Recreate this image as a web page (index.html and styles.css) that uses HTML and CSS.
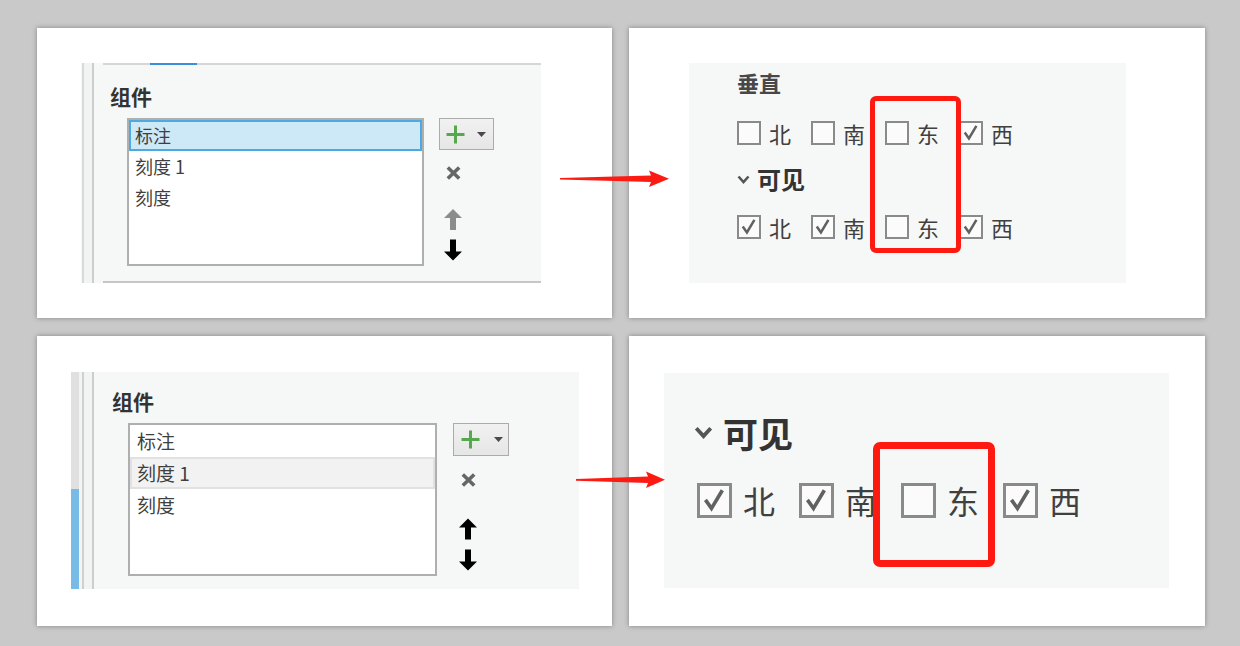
FILE: index.html
```html
<!DOCTYPE html>
<html lang="zh-CN">
<head>
<meta charset="utf-8">
<title>组件与可见性</title>
<link rel="stylesheet" href="styles.css">
</head>
<body>
<div class="grid">
  <!-- top left -->
  <div class="card c1">
    <div class="panel p1">
      <div class="rail r1"></div>
      <div class="pbody b1">
        <div class="tabline"><span class="tabsel"></span></div>
        <h3 class="grp g1">组件</h3>
        <div class="comp">
          <ul class="list l1">
            <li class="item sel">标注</li>
            <li class="item">刻度 1</li>
            <li class="item">刻度</li>
          </ul>
          <div class="tools t1">
            <div class="addbtn">
              <svg class="plus" viewBox="0 0 19 19"><path d="M9.5 0.5V18.5M0.5 9.5H18.5"/></svg>
              <svg class="tri" viewBox="0 0 9 5"><polygon points="0,0 9,0 4.5,5"/></svg>
            </div>
            <svg class="xicon" viewBox="0 0 15 14"><path d="M1.8 1.5L13.2 12.5M13.2 1.5L1.8 12.5"/></svg>
            <svg class="arr up grey" viewBox="0 0 18 21"><polygon points="9,0 18,9 12,9 12,21 6,21 6,9 0,9"/></svg>
            <svg class="arr down" viewBox="0 0 18 21"><polygon points="9,21 18,12 12,12 12,0 6,0 6,12 0,12"/></svg>
          </div>
        </div>
        <div class="bottomline"></div>
      </div>
    </div>
  </div>

  <!-- top right -->
  <div class="card c2">
    <div class="panel p2">
      <h3 class="sub s2">垂直</h3>
      <div class="cbrow row2a">
        <label class="cb"><span class="box"></span><span class="lbl">北</span></label>
        <label class="cb"><span class="box"></span><span class="lbl">南</span></label>
        <label class="cb"><span class="box"></span><span class="lbl">东</span></label>
        <label class="cb"><span class="box"><svg viewBox="0 0 24 24"><path d="M4.5 11.5L9.5 18.5L18.5 3.5"/></svg></span><span class="lbl">西</span></label>
      </div>
      <div class="exp e2">
        <svg class="chev" viewBox="0 0 13 9"><path d="M1.5 1.5L6.5 7L11.5 1.5"/></svg>
        <span class="exptxt">可见</span>
      </div>
      <div class="cbrow row2b">
        <label class="cb"><span class="box"><svg viewBox="0 0 24 24"><path d="M4.5 11.5L9.5 18.5L18.5 3.5"/></svg></span><span class="lbl">北</span></label>
        <label class="cb"><span class="box"><svg viewBox="0 0 24 24"><path d="M4.5 11.5L9.5 18.5L18.5 3.5"/></svg></span><span class="lbl">南</span></label>
        <label class="cb"><span class="box"></span><span class="lbl">东</span></label>
        <label class="cb"><span class="box"><svg viewBox="0 0 24 24"><path d="M4.5 11.5L9.5 18.5L18.5 3.5"/></svg></span><span class="lbl">西</span></label>
      </div>
    </div>
  </div>

  <!-- bottom left -->
  <div class="card c3">
    <div class="panel p3">
      <div class="rail r3"><span class="strip"></span></div>
      <div class="pbody b3">
        <h3 class="grp g3">组件</h3>
        <div class="comp">
          <ul class="list l3">
            <li class="item">标注</li>
            <li class="item hov">刻度 1</li>
            <li class="item">刻度</li>
          </ul>
          <div class="tools t3">
            <div class="addbtn">
              <svg class="plus" viewBox="0 0 19 19"><path d="M9.5 0.5V18.5M0.5 9.5H18.5"/></svg>
              <svg class="tri" viewBox="0 0 9 5"><polygon points="0,0 9,0 4.5,5"/></svg>
            </div>
            <svg class="xicon" viewBox="0 0 15 14"><path d="M1.8 1.5L13.2 12.5M13.2 1.5L1.8 12.5"/></svg>
            <svg class="arr up" viewBox="0 0 18 21"><polygon points="9,0 18,9 12,9 12,21 6,21 6,9 0,9"/></svg>
            <svg class="arr down" viewBox="0 0 18 21"><polygon points="9,21 18,12 12,12 12,0 6,0 6,12 0,12"/></svg>
          </div>
        </div>
      </div>
    </div>
  </div>

  <!-- bottom right -->
  <div class="card c4">
    <div class="panel p4">
      <div class="exp e4">
        <svg class="chev" viewBox="0 0 13 9"><path d="M1.5 1.5L6.5 7L11.5 1.5"/></svg>
        <span class="exptxt">可见</span>
      </div>
      <div class="cbrow row4">
        <label class="cb"><span class="box"><svg viewBox="0 0 24 24"><path d="M4.5 11.5L9.5 18.5L18.5 3.5"/></svg></span><span class="lbl">北</span></label>
        <label class="cb"><span class="box"><svg viewBox="0 0 24 24"><path d="M4.5 11.5L9.5 18.5L18.5 3.5"/></svg></span><span class="lbl">南</span></label>
        <label class="cb"><span class="box"></span><span class="lbl">东</span></label>
        <label class="cb"><span class="box"><svg viewBox="0 0 24 24"><path d="M4.5 11.5L9.5 18.5L18.5 3.5"/></svg></span><span class="lbl">西</span></label>
      </div>
    </div>
  </div>
</div>

<!-- overlays -->
<div class="hl hl1"></div>
<div class="hl hl2"></div>
<svg class="redarrow ra1" viewBox="0 0 109 18"><polygon points="0,8.1 91,5.4 89,0.5 109,8.8 89,17 91,12 0,9.6"/></svg>
<svg class="redarrow ra2" viewBox="0 0 89 18"><polygon points="0,8.1 72,5.4 70,0.5 89,8.8 70,17 72,12 0,9.7"/></svg>
</body>
</html>
```
FILE: styles.css
```css
* { box-sizing: border-box; margin: 0; padding: 0; }

body {
  width: 1240px;
  height: 646px;
  overflow: hidden;
  position: relative;
  background: #c9c9c9;
  font-family: "Noto Sans CJK SC", "Noto Sans", sans-serif;
  color: #444;
}

.grid {
  display: grid;
  grid-template-columns: 575px 576px;
  grid-template-rows: 290px 290px;
  column-gap: 17px;
  row-gap: 18px;
  padding: 28px 0 0 37px;
}

.card {
  background: #fff;
  box-shadow: 0 0 5px rgba(0, 0, 0, 0.35);
  display: flex;
  align-items: flex-start;
}

.panel {
  background: #f6f7f7;
  display: flex;
}

/* ---------- left cards (component list) ---------- */
.c1 { padding: 35px 0 0 44px; }
.p1 { width: 460px; height: 220px; }

.rail { height: 100%; flex: none; }
.r1 {
  width: 22px;
  background: linear-gradient(to right,
    transparent 0 1px, #d9d9d9 1px 3px, #f2f3f3 3px 11px, #cdcdcd 11px 13px, transparent 13px);
}

.pbody { flex: 1; display: flex; flex-direction: column; height: 100%; }

.tabline {
  height: 2px;
  background: #d6d6d6;
  display: flex;
}
.tabsel { margin-left: 47px; width: 47px; height: 2px; background: #3a8fd8; }

.bottomline { margin-top: auto; height: 2px; background: #c6c6c6; }

.grp {
  font-size: 21px;
  line-height: 21px;
  font-weight: bold;
  color: #333;
}
.g1 { margin: 21px 0 0 7px; }

.comp { display: flex; align-items: flex-start; }

.list {
  list-style: none;
  background: #fff;
  border: 2px solid #afafaf;
  flex: none;
}
.l1 { margin: 11px 0 0 24px; width: 297px; height: 148px; }

.item {
  font-size: 18px;
  line-height: 31px;
  height: 31px;
  padding-left: 6px;
  color: #3f3f3f;
  white-space: nowrap;
}
.sel {
  background: #cde8f7;
  border: 2px solid #4ea9e0;
  line-height: 27px;
  padding-left: 4px;
}

.tools { display: flex; flex-direction: column; align-items: flex-start; flex: none; }
.t1 { margin: 11px 0 0 15px; }

.addbtn {
  width: 55px;
  height: 32px;
  border: 1px solid #ababab;
  background: linear-gradient(#f1f1f1, #e6e6e6);
  display: flex;
  align-items: center;
}
.plus { width: 19px; height: 19px; margin-left: 6px; }
.plus path { stroke: #55a94c; stroke-width: 3; fill: none; }
.tri { width: 9px; height: 5px; margin-left: 12px; }
.tri polygon { fill: #4a4a4a; }

.xicon { width: 15px; height: 14px; margin: 16px 0 0 7px; }
.xicon path { stroke: #666; stroke-width: 3.6; fill: none; }

.arr { width: 18px; height: 21px; margin-left: 5px; }
.arr polygon { fill: #000; }
.arr.grey polygon { fill: #8c8c8c; }
.t1 .up { margin-top: 29px; }
.t1 .down { margin-top: 9px; height: 22px; }

/* bottom-left */
.c3 { padding: 36px 0 0 34px; }
.p3 { width: 508px; height: 217px; }
.r3 {
  width: 30px;
  display: flex;
  background: linear-gradient(to right,
    transparent 0 8px, #f2f3f3 8px 11px, #d0d0d0 11px 13px, #f2f3f3 13px 21px, #cdcdcd 21px 23px, transparent 23px);
}
.strip {
  width: 8px;
  height: 100%;
  background: linear-gradient(#e0e0e0 0 117px, #78bbe7 117px);
}
.g3 { margin: 19px 0 0 11px; }
.l3 { margin: 11px 0 0 27px; width: 309px; height: 153px; }
.l3 .item { height: 32px; line-height: 32px; font-size: 19px; padding-left: 7px; }
.l3 .hov {
  background: #f2f2f2;
  border: 2px solid #e1e1e1;
  line-height: 28px;
  padding-left: 5px;
}
.t3 { margin: 11px 0 0 16px; }
.t3 .addbtn { width: 56px; height: 33px; }
.t3 .plus { margin-left: 7px; }
.t3 .tri { margin-left: 14px; }
.t3 .xicon { margin: 17px 0 0 8px; }
.t3 .arr { margin-left: 6px; }
.t3 .up { margin-top: 31px; height: 22px; }
.t3 .down { margin-top: 9px; height: 22px; }

/* ---------- right cards (checkbox groups) ---------- */
.c2 { padding: 35px 0 0 60px; }
.p2 {
  width: 437px;
  height: 220px;
  flex-direction: column;
  padding-left: 48px;
}

.sub {
  font-size: 22px;
  line-height: 22px;
  font-weight: bold;
  color: #484848;
}
.s2 { margin-top: 8px; }

.cbrow { display: flex; align-items: center; }
.cb { display: flex; align-items: center; }
.box {
  display: flex;
  width: 24px;
  height: 24px;
  border: 2px solid #8a8a8a;
  background: #fbfbfb;
  flex: none;
}
.box svg { width: 100%; height: 100%; overflow: visible; }
.box path { stroke: #616161; stroke-width: 3; fill: none; stroke-linejoin: miter; }
.lbl {
  font-size: 22px;
  line-height: 24px;
  color: #404040;
  margin-left: 8px;
  margin-right: 20px;
}
.row2a { margin-top: 28px; }
.row2b { margin-top: 24px; }

.exp { display: flex; align-items: center; }
.chev { width: 13px; height: 9px; }
.chev path { stroke: #555; stroke-width: 2.6; fill: none; }
.exptxt {
  font-size: 24px;
  line-height: 24px;
  font-weight: bold;
  color: #333;
  margin-left: 7px;
}
.e2 { margin-top: 22px; }

/* bottom-right */
.c4 { padding: 37px 0 0 35px; }
.p4 {
  width: 505px;
  height: 215px;
  flex-direction: column;
  padding-left: 29px;
}
.e4 { margin-top: 42px; }
.e4 .chev { width: 21px; height: 13px; }
.e4 .chev path { stroke-width: 2.6; }
.e4 .exptxt { font-size: 35px; line-height: 35px; margin-left: 9px; }
.row4 { margin: 33px 0 0 4px; }
.row4 .box { width: 35px; height: 35px; border-width: 3px; }
.row4 .box path { stroke-width: 3; }
.row4 .lbl { font-size: 32px; line-height: 35px; margin-left: 11px; margin-right: 24px; }

/* ---------- overlays ---------- */
.hl {
  position: absolute;
  border: 5px solid #fe1a10;
  border-radius: 6px;
}
.hl1 { left: 870px; top: 96px; width: 91px; height: 157px; }
.hl2 { left: 873px; top: 442px; width: 122px; height: 125px; border-width: 7px; border-radius: 7px; }

.redarrow { position: absolute; }
.redarrow polygon { fill: #fc1b12; }
.ra1 { left: 560px; top: 170px; width: 109px; height: 18px; }
.ra2 { left: 576px; top: 471px; width: 89px; height: 18px; }
```
